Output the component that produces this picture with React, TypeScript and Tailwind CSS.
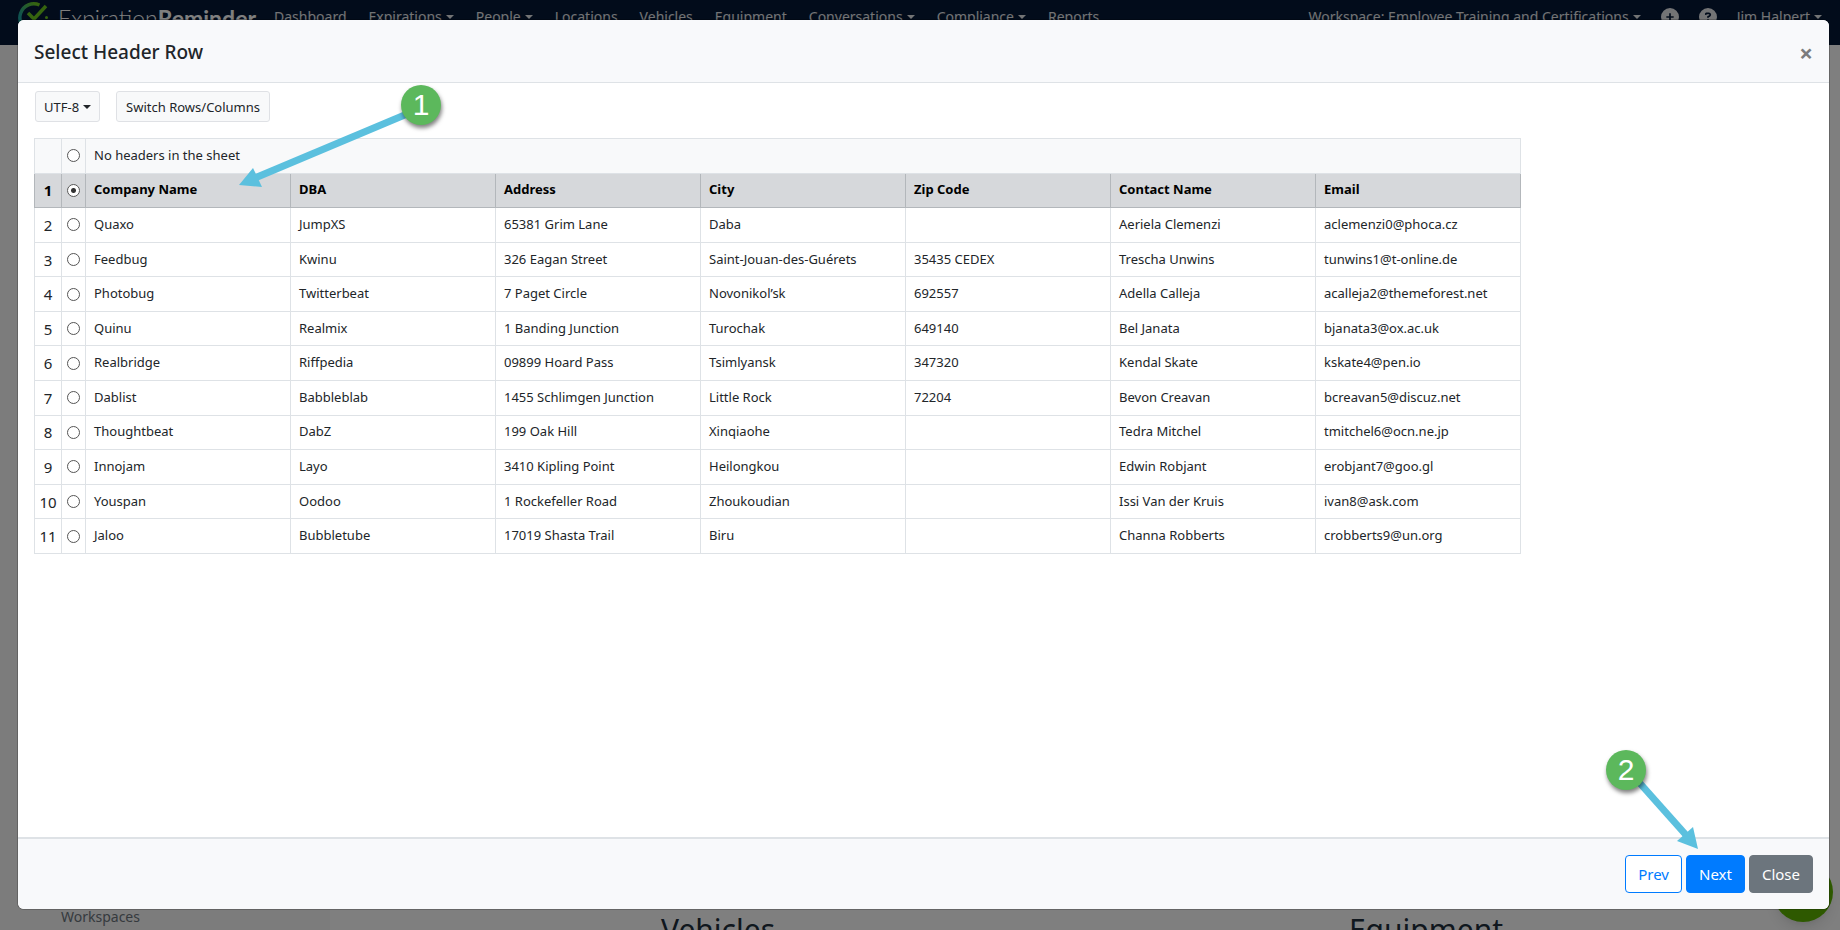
import { useState } from "react";
import { FaCircleQuestion, FaCirclePlus } from "react-icons/fa6";

const NAV = [
  { label: "Dashboard" },
  { label: "Expirations", menu: true },
  { label: "People", menu: true },
  { label: "Locations" },
  { label: "Vehicles" },
  { label: "Equipment" },
  { label: "Conversations", menu: true },
  { label: "Compliance", menu: true },
  { label: "Reports" },
];

const ROWS = [
  ["Company Name", "DBA", "Address", "City", "Zip Code", "Contact Name", "Email"],
  ["Quaxo", "JumpXS", "65381 Grim Lane", "Daba", "", "Aeriela Clemenzi", "aclemenzi0@phoca.cz"],
  ["Feedbug", "Kwinu", "326 Eagan Street", "Saint-Jouan-des-Guérets", "35435 CEDEX", "Trescha Unwins", "tunwins1@t-online.de"],
  ["Photobug", "Twitterbeat", "7 Paget Circle", "Novonikol’sk", "692557", "Adella Calleja", "acalleja2@themeforest.net"],
  ["Quinu", "Realmix", "1 Banding Junction", "Turochak", "649140", "Bel Janata", "bjanata3@ox.ac.uk"],
  ["Realbridge", "Riffpedia", "09899 Hoard Pass", "Tsimlyansk", "347320", "Kendal Skate", "kskate4@pen.io"],
  ["Dablist", "Babbleblab", "1455 Schlimgen Junction", "Little Rock", "72204", "Bevon Creavan", "bcreavan5@discuz.net"],
  ["Thoughtbeat", "DabZ", "199 Oak Hill", "Xinqiaohe", "", "Tedra Mitchel", "tmitchel6@ocn.ne.jp"],
  ["Innojam", "Layo", "3410 Kipling Point", "Heilongkou", "", "Edwin Robjant", "erobjant7@goo.gl"],
  ["Youspan", "Oodoo", "1 Rockefeller Road", "Zhoukoudian", "", "Issi Van der Kruis", "ivan8@ask.com"],
  ["Jaloo", "Bubbletube", "17019 Shasta Trail", "Biru", "", "Channa Robberts", "crobberts9@un.org"],
];

const RADIO =
  "mx-auto block size-[13px] appearance-none rounded-full border border-[#555] bg-white checked:bg-[radial-gradient(circle,#333_0_2px,#fff_3px)]";

function Caret() {
  return (
    <svg viewBox="0 0 8 4" className="h-1 w-2 shrink-0" fill="currentColor" aria-hidden="true">
      <path d="M0 0h8L4 4z" />
    </svg>
  );
}

function Logo() {
  return (
    <a href="#home" className="flex items-start gap-2 text-white">
      <svg viewBox="0 0 32 32" className="mt-px h-8 w-8" fill="none" aria-hidden="true">
        <defs>
          <linearGradient id="ring" x1="0" y1="1" x2="1" y2="0">
            <stop offset="0.3" stopColor="#1fa6a0" />
            <stop offset="0.8" stopColor="#6cc81e" />
          </linearGradient>
        </defs>
        <path d="M21.5 4A14 14 0 1 0 29.5 20" stroke="url(#ring)" strokeWidth="3.5" />
        <path d="M10 12l6 6 12-13" stroke="#6cc81e" strokeWidth="3.5" />
        <circle cx="28.5" cy="16.5" r="1.5" fill="#6cc81e" />
      </svg>
      <span className="mt-1 font-['Lato',sans-serif] text-[23px] leading-7 font-light">
        Expiration<b className="font-bold">Reminder</b>
      </span>
    </a>
  );
}

function NavBar() {
  return (
    <nav className="flex h-[45px] items-start justify-between bg-[#041836] px-[18px] text-white/90">
      <div className="flex items-start gap-[18px]">
        <Logo />
        <ul className="flex gap-[22px] pt-[7px] text-sm leading-5">
          {NAV.map((item) => (
            <li key={item.label}>
              <a href="#nav" className="flex items-center gap-1">
                {item.label}
                {item.menu && <Caret />}
              </a>
            </li>
          ))}
        </ul>
      </div>
      <div className="flex items-center pt-[7px] text-sm leading-5">
        <button type="button" className="flex items-center gap-1">
          Workspace: Employee Training and Certifications
          <Caret />
        </button>
        <button type="button" aria-label="Add" className="ml-5 text-lg">
          <FaCirclePlus />
        </button>
        <button type="button" aria-label="Help" className="ml-5 text-lg">
          <FaCircleQuestion />
        </button>
        <button type="button" className="ml-5 flex items-center gap-1">
          Jim Halpert
          <Caret />
        </button>
      </div>
    </nav>
  );
}

// Page under the dialog: only its edges show round the dialog
function Background() {
  return (
    <div className="flex h-full flex-col bg-white">
      <NavBar />
      <div className="flex flex-1">
        <aside className="flex w-[330px] flex-col justify-end bg-[#f8f8f8] pb-[3px] pl-[61px] text-sm leading-5 text-[#6c757d]">
          <a href="#workspaces">Workspaces</a>
        </aside>
        <main className="grid flex-1 grid-cols-2 items-end pr-[60px] pl-[34px] text-center text-3xl leading-8 text-[#212f3d]">
          <h2 className="-mb-4">Vehicles</h2>
          <h2 className="-mb-4">Equipment</h2>
        </main>
      </div>
      <button
        type="button"
        aria-label="Open chat"
        className="absolute right-[7px] bottom-2 size-[60px] rounded-full bg-[#5cb300] shadow-lg"
      />
    </div>
  );
}

function HeaderTable() {
  const [header, setHeader] = useState(0);

  return (
    <table className="h-[416px] w-[1487px] table-fixed border-collapse border border-[#dee2e6] text-[13px] leading-5 text-[#212529]">
      <colgroup>
        <col className="w-[27px]" />
        <col className="w-6" />
        <col span={7} />
      </colgroup>
      <tbody>
        <tr className="bg-[#f8f9fa]">
          <td className="border border-[#dee2e6]" />
          <td className="border border-[#dee2e6]">
            <input
              id="row-none"
              type="radio"
              name="header"
              checked={header === -1}
              onChange={() => setHeader(-1)}
              className={RADIO}
            />
          </td>
          <td colSpan={7} className="border border-[#dee2e6] px-2 pb-0.5">
            <label htmlFor="row-none">No headers in the sheet</label>
          </td>
        </tr>
        {ROWS.map((cells, i) => {
          const active = i === header;
          const border = active ? "border border-[#b3b7bb]" : "border border-[#dee2e6]";
          return (
            <tr key={cells[0]} className={active ? "bg-[#d6d8db] font-bold text-black" : ""}>
              <td className={`${border} text-center text-[15px]`}>{i + 1}</td>
              <td className={border}>
                <input
                  type="radio"
                  name="header"
                  aria-label={`Row ${i + 1}`}
                  checked={active}
                  onChange={() => setHeader(i)}
                  className={RADIO}
                />
              </td>
              {cells.map((cell, c) => (
                <td key={c} className={`${border} px-2 pb-0.5 whitespace-nowrap`}>
                  {cell}
                </td>
              ))}
            </tr>
          );
        })}
      </tbody>
    </table>
  );
}

function StepOne() {
  return (
    <svg viewBox="0 0 212 112" className="pointer-events-none absolute top-0 left-[217px] h-28 w-[212px]" aria-hidden="true">
      <path d="M172 31L20 95" stroke="#5bc0de" strokeWidth="7" />
      <path d="M4 102L18 85L27 104z" fill="#5bc0de" />
      <circle cx="186" cy="22" r="20" fill="#5cb85c" className="drop-shadow-[1px_3px_2px_rgba(0,0,0,0.5)]" />
      <text x="186" y="32" textAnchor="middle" fill="#fff" fontSize="30" fontFamily="Liberation Sans">
        1
      </text>
    </svg>
  );
}

function StepTwo() {
  return (
    <svg viewBox="0 0 110 110" className="pointer-events-none absolute right-[119px] bottom-[55px] h-[110px] w-[110px]" aria-hidden="true">
      <path d="M37 36L86 91" stroke="#5bc0de" strokeWidth="7" />
      <path d="M98 105L93 83L77 97z" fill="#5bc0de" />
      <circle cx="26" cy="26" r="20" fill="#5cb85c" className="drop-shadow-[1px_3px_2px_rgba(0,0,0,0.5)]" />
      <text x="26" y="36" textAnchor="middle" fill="#fff" fontSize="30" fontFamily="Liberation Sans">
        2
      </text>
    </svg>
  );
}

export default function App() {
  return (
    <div className="relative h-screen overflow-hidden font-['Noto_Sans',sans-serif]">
      <Background />
      <div className="absolute inset-0 flex bg-black/50 pt-5 pr-[11px] pb-[21px] pl-[18px]">
        <section
          role="dialog"
          aria-labelledby="dialog-title"
          className="flex flex-1 flex-col overflow-hidden rounded-md bg-white ring-1 ring-black/20"
        >
          <header className="flex h-[63px] items-center justify-between border-b border-[#dee2e6] bg-[#f8f9fb] px-4 pt-1">
            <h1 id="dialog-title" className="pb-0.5 text-[19px] font-medium text-[#212529]">
              Select Header Row
            </h1>
            <button type="button" aria-label="Close dialog" className="text-2xl font-bold text-[#7b7c7d]">
              ×
            </button>
          </header>

          <div className="relative flex-1 px-4 pt-2">
            <div className="mb-4 flex gap-4 pl-px text-[13px] leading-5 text-[#212529]">
              <button
                type="button"
                className="flex h-[31px] items-center gap-1 rounded-[3px] border border-[#dfe1e5] bg-[#f8f9fa] px-2"
              >
                UTF-8 <Caret />
              </button>
              <button
                type="button"
                className="h-[31px] rounded-[3px] border border-[#dfe1e5] bg-[#f8f9fa] px-[9px]"
              >
                Switch Rows/Columns
              </button>
            </div>
            <HeaderTable />
            <StepOne />
          </div>

          <footer className="relative flex h-[72px] items-center justify-end gap-1 border-t-2 border-[#dee2e6] bg-[#f8f9fb] px-4 text-[15px] text-white">
            <button type="button" className="h-[38px] rounded border border-[#007bff] bg-white px-3 text-[#007bff]">
              Prev
            </button>
            <button type="button" className="h-[38px] rounded border border-[#007bff] bg-[#007bff] px-3">
              Next
            </button>
            <button type="button" className="h-[38px] rounded border border-[#6c757d] bg-[#6c757d] px-3">
              Close
            </button>
            <StepTwo />
          </footer>
        </section>
      </div>
    </div>
  );
}
